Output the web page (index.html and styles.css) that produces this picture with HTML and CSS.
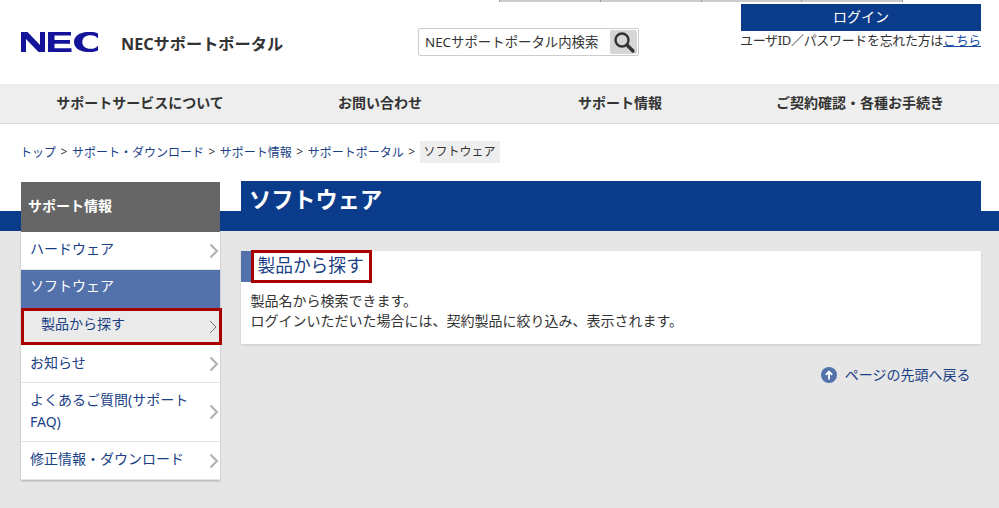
FILE: index.html
```html
<!DOCTYPE html>
<html lang="ja">
<head>
<meta charset="utf-8">
<title>ソフトウェア | NECサポートポータル</title>
<link rel="stylesheet" href="styles.css">
</head>
<body>
<div class="toptabs"><span></span><span></span><span></span><span></span></div>
<header class="header">
  <div class="brand">
    <svg class="logo" width="78" height="20" viewBox="0 0 78 20" role="img" aria-label="NEC">
      <path fill="#14149b" d="M0 0h6.500L19 13V0h5v20h-6.500L5 7v13H0z"/>
      <path fill="#14149b" d="M27 0h23v3.600H33.500v4.300H49v3.800H33.500v4.600H50.500V20H27z"/>
      <path fill="#14149b" d="M77 6.600C75.500 4.300 73 3.200 69.500 3.200c-5 0-8.200 2.700-8.200 6.800s3.200 6.800 8.200 6.800c3.500 0 6-1.100 7.500-3.400v5.200c-2.300 1.100-5 1.600-8.500 1.600C59.500 20.200 53 16.300 53 10S59.500-.2 68.500-.2c3.500 0 6.200.5 8.500 1.600z"/>
    </svg>
    <span class="sitename">NECサポートポータル</span>
  </div>
  <form class="search">
    <span class="search-text">NECサポートポータル内検索</span>
    <span class="search-btn">
      <svg width="24" height="24" viewBox="0 0 24 24"><circle cx="10" cy="10" r="6.500" fill="none" stroke="#333" stroke-width="2.400"/><path d="M15 15l6 6" stroke="#333" stroke-width="3.400" stroke-linecap="round"/></svg>
    </span>
  </form>
  <div class="account">
    <a class="login">ログイン</a>
    <p class="forgot">ユーザID／パスワードを忘れた方は<a class="link-u">こちら</a></p>
  </div>
</header>
<nav class="gnav">
  <a>サポートサービスについて</a>
  <a>お問い合わせ</a>
  <a>サポート情報</a>
  <a>ご契約確認・各種お手続き</a>
</nav>
<ol class="crumbs">
  <li><a>トップ</a></li><li class="sep">&gt;</li>
  <li><a>サポート・ダウンロード</a></li><li class="sep">&gt;</li>
  <li><a>サポート情報</a></li><li class="sep">&gt;</li>
  <li><a>サポートポータル</a></li><li class="sep">&gt;</li>
  <li class="current">ソフトウェア</li>
</ol>
<div class="body">
  <aside class="side">
    <h2 class="side-head">サポート情報</h2>
    <ul class="side-list">
      <li class="item"><a>ハードウェア</a><svg class="chev" width="10" height="16" viewBox="0 0 10 16"><path d="M1.500 1.500L8 8l-6.500 6.500" fill="none" stroke="#b0b0b0" stroke-width="2"/></svg></li>
      <li class="item active"><a>ソフトウェア</a></li>
      <li class="item sub"><a>製品から探す</a><svg class="chev" width="8" height="14" viewBox="0 0 8 14"><path d="M1 1l6 6-6 6" fill="none" stroke="#777" stroke-width="1"/></svg></li>
      <li class="item low"><a>お知らせ</a><svg class="chev" width="10" height="16" viewBox="0 0 10 16"><path d="M1.500 1.500L8 8l-6.500 6.500" fill="none" stroke="#b0b0b0" stroke-width="2"/></svg></li>
      <li class="item low"><a>よくあるご質問(サポートFAQ)</a><svg class="chev" width="10" height="16" viewBox="0 0 10 16"><path d="M1.500 1.500L8 8l-6.500 6.500" fill="none" stroke="#b0b0b0" stroke-width="2"/></svg></li>
      <li class="item"><a>修正情報・ダウンロード</a><svg class="chev" width="10" height="16" viewBox="0 0 10 16"><path d="M1.500 1.500L8 8l-6.500 6.500" fill="none" stroke="#b0b0b0" stroke-width="2"/></svg></li>
    </ul>
  </aside>
  <main class="main">
    <h1 class="title">ソフトウェア</h1>
    <section class="card">
      <div class="card-head"><h2 class="card-title">製品から探す</h2></div>
      <p class="card-text">製品名から検索できます。<br>ログインいただいた場合には、契約製品に絞り込み、表示されます。</p>
    </section>
    <a class="pagetop">
      <svg width="16" height="16" viewBox="0 0 16 16"><circle cx="8" cy="8" r="8" fill="#5372ac"/><path d="M8 12.500V5M4.800 7.800L8 4.500l3.200 3.300" fill="none" stroke="#fff" stroke-width="1.800"/></svg>
      <span>ページの先頭へ戻る</span>
    </a>
  </main>
</div>
</body>
</html>
```

FILE: styles.css
```css
* { box-sizing: border-box; }
html, body { margin: 0; padding: 0; }
body {
  width: 999px;
  height: 508px;
  overflow: hidden;
  background: #fff;
  color: #333;
  font-family: "Noto Sans", "Noto Sans CJK JP", sans-serif;
  font-size: 14px;
}
a { color: #1a3f85; text-decoration: none; }
p, h1, h2, ul, ol { margin: 0; padding: 0; list-style: none; }

.toptabs { display: flex; margin-left: 499px; height: 2px; width: 404px; }
.toptabs span { flex: 1; background: #ccc; border-right: 1px solid #999; }
.toptabs span:first-child { border-left: 1px solid #999; }

.header { height: 82px; display: flex; position: relative; padding-left: 21px; }
.brand { display: flex; align-items: center; width: 397px; height: 50px; margin-top: 18px; }
.logo { flex: none; margin-top: -7px; }
.sitename { margin-left: 22px; font-size: 16.200px; font-weight: 700; color: #333; line-height: 20px; margin-top: -2px; }
.search {
  width: 221px; height: 28px; margin-top: 26px;
  border: 1px solid #ccc; border-radius: 2px;
  display: flex; align-items: center; justify-content: space-between;
  padding: 1px 1px 1px 6px; background: #fff;
}
.search-text { font-size: 13.400px; color: #333; line-height: 24px; white-space: nowrap; }
.search-btn { width: 27px; height: 24px; background: #d6d6d6; border-radius: 2px; display: flex; align-items: center; justify-content: center; }
.account { margin-left: 102px; width: 240px; padding-top: 2px; }
.login { display: block; height: 27px; background: #0b3c8c; color: #fff; text-align: center; line-height: 25px; font-size: 14px; }
.forgot { font-size: 13px; line-height: 20px; margin-top: -1px; color: #333; white-space: nowrap; letter-spacing: -0.330px; margin-left: -1px; }
.link-u { text-decoration: underline; color: #1a4fa0; }

.gnav { height: 40px; background: #eee; border-bottom: 1px solid #d8d8d8; display: grid; grid-template-columns: 240px 240px 240px 240px; padding-left: 20px; align-items: start; }
.gnav a { color: #333; font-weight: 700; font-size: 14px; text-align: center; line-height: 38px; white-space: nowrap; }

.crumbs { display: flex; align-items: center; height: 57px; padding: 0 0 2px 20px; font-size: 12px; white-space: nowrap; }
.crumbs .sep { margin: 0 4.500px; color: #333; }
.crumbs .current { background: #eee; padding: 0 4px; line-height: 22px; margin-left: 0; color: #333; }

.body {
  display: flex;
  height: 327px;
  padding-left: 21px;
  background: linear-gradient(#fff 0 30px, #0b3c8c 30px 50px, #e6e6e6 50px);
}
.side { width: 199px; margin-top: 1px; }
.side-head { height: 50px; background: #666; color: #fff; font-size: 14px; font-weight: 700; line-height: 48px; padding-left: 7px; }
.side-list { background: #fff; box-shadow: 0 1px 2px rgba(0,0,0,.25); }
.item { display: flex; align-items: center; justify-content: space-between; padding: 0 1px 0 9px; min-height: 38px; border-bottom: 1px solid #e4e4e4; line-height: 22px; font-size: 14px; position: relative; }
.item a { flex: 1; padding: 5px 0 9px; }
.item.low a { padding: 6px 0 8px; }
.item .chev { flex: none; margin-left: 8px; }
.item.active { background: #5372ac; border-bottom: 0; line-height: 21px; }
.item.active a { color: #fff; padding: 4px 0 12px; }
.item.sub { background: #eaeaea; padding-left: 20px; height: 37px; min-height: 37px; border: 0; font-size: 14px; line-height: 21px; }
.item.sub a { padding: 5px 0 11px; }
.item.sub::after { content: ""; position: absolute; left: 0; right: -2px; top: 0; bottom: 0; border: 3px solid #a80000; }
.item.sub .chev { margin-right: 2px; }

.main { width: 740px; margin-left: 21px; }
.title { height: 50px; background: #0b3c8c; color: #fff; font-size: 22.200px; font-weight: 700; line-height: 38px; padding-left: 8px; }
.card { margin-top: 20px; height: 93px; background: #fff; box-shadow: 0 1px 2px rgba(0,0,0,.12); }
.card-head { height: 31px; border-left: 10px solid #5372ac; }
.card-title { display: inline-block; width: 121px; height: 33px; margin-top: -1px; padding: 0 0 0 3.500px; border: 3px solid #a80000; background: #fff; color: #1a3f85; font-size: 17.700px; font-weight: 400; line-height: 24px; white-space: nowrap; }
.card-text { padding: 9px 10px 0 9.500px; line-height: 20px; font-size: 14px; color: #333; }
.pagetop { display: flex; align-items: center; justify-content: flex-end; gap: 8px; margin-top: 20px; padding-right: 10.500px; line-height: 22px; font-size: 14px; }
```
